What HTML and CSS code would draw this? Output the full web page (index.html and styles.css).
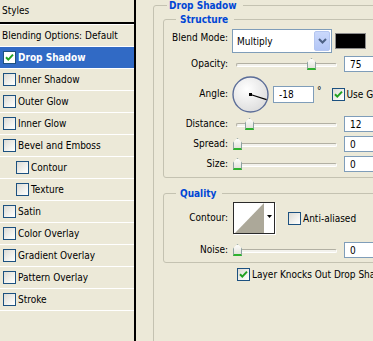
FILE: index.html
```html
<!DOCTYPE html>
<html lang="en">
<head>
  <meta charset="UTF-8" />
  <title>Layer Style</title>
  <link rel="stylesheet" href="styles.css">
</head>
<body>
  <div class="dialog">
    <div class="styles-panel">
      <div class="styles-head">Styles</div>
      <ul class="style-list">
        <li class="style-item blending">Blending Options: Default</li>
        <li class="style-item active">
          <span class="cb on"><svg viewBox="0 0 11 11" width="11" height="11"><path d="M2 5.2l2.3 2.4L9 2.6" /></svg></span>Drop Shadow
        </li>
        <li class="style-item"><span class="cb"></span>Inner Shadow</li>
        <li class="style-item"><span class="cb"></span>Outer Glow</li>
        <li class="style-item"><span class="cb"></span>Inner Glow</li>
        <li class="style-item"><span class="cb"></span>Bevel and Emboss</li>
        <li class="style-item sub"><span class="cb"></span>Contour</li>
        <li class="style-item sub"><span class="cb"></span>Texture</li>
        <li class="style-item"><span class="cb"></span>Satin</li>
        <li class="style-item"><span class="cb"></span>Color Overlay</li>
        <li class="style-item"><span class="cb"></span>Gradient Overlay</li>
        <li class="style-item"><span class="cb"></span>Pattern Overlay</li>
        <li class="style-item"><span class="cb"></span>Stroke</li>
      </ul>
    </div>

    <div class="options">
      <fieldset class="group outer">
        <legend>Drop Shadow</legend>

        <fieldset class="group inner structure">
          <legend>Structure</legend>

          <div class="row blend-row">
            <label class="lbl">Blend Mode:</label>
            <div class="select">
              <span>Multiply</span>
              <span class="select-btn"><svg viewBox="0 0 9 6" width="9" height="6"><path d="M1 1l3.5 3.5L8 1" /></svg></span>
            </div>
            <span class="swatch"></span>
          </div>

          <div class="row">
            <label class="lbl">Opacity:</label>
            <div class="slider"><span class="track"></span><span class="thumb" style="left: 74px"></span></div>
            <input class="num" type="text" value="75">
          </div>

          <div class="row angle-row">
            <label class="lbl">Angle:</label>
            <svg class="dial" viewBox="0 0 37 37" width="37" height="37">
              <defs>
                <radialGradient id="dialFill" cx="40%" cy="35%" r="70%">
                  <stop offset="0" stop-color="#ffffff" />
                  <stop offset="1" stop-color="#dcdcdc" />
                </radialGradient>
              </defs>
              <circle cx="18.5" cy="18.5" r="17.5" fill="url(#dialFill)" stroke="#5b6d98" stroke-width="1.4" />
              <line x1="18.5" y1="18.5" x2="34.5" y2="23.6" stroke="#000" stroke-width="1.2" />
              <rect x="17" y="17" width="3" height="3" fill="#000" />
            </svg>
            <input class="num angle" type="text" value="-18">
            <span class="deg">°</span>
            <span class="cb on"><svg viewBox="0 0 11 11" width="11" height="11"><path d="M2 5.2l2.3 2.4L9 2.6" /></svg></span>
            <span class="cb-text">Use Global Light</span>
          </div>

          <div class="row">
            <label class="lbl">Distance:</label>
            <div class="slider"><span class="track"></span><span class="thumb" style="left: 12px"></span></div>
            <input class="num" type="text" value="12">
          </div>

          <div class="row">
            <label class="lbl">Spread:</label>
            <div class="slider"><span class="track"></span><span class="thumb" style="left: 0px"></span></div>
            <input class="num" type="text" value="0">
          </div>

          <div class="row">
            <label class="lbl">Size:</label>
            <div class="slider"><span class="track"></span><span class="thumb" style="left: 0px"></span></div>
            <input class="num" type="text" value="0">
          </div>
        </fieldset>

        <fieldset class="group inner quality">
          <legend>Quality</legend>

          <div class="row contour-row">
            <label class="lbl">Contour:</label>
            <span class="contour">
              <svg viewBox="0 0 40 30" width="40" height="30">
                <rect width="40" height="30" fill="#fff" />
                <polygon points="1,30 30,0 30,30" fill="#aca899" />
                <polygon points="33,12 38,12 35.5,15" fill="#000" />
              </svg>
            </span>
            <span class="cb aa"></span>
            <span class="cb-text">Anti-aliased</span>
          </div>

          <div class="row noise-row">
            <label class="lbl">Noise:</label>
            <div class="slider"><span class="track"></span><span class="thumb" style="left: 0px"></span></div>
            <input class="num" type="text" value="0">
          </div>
        </fieldset>

        <div class="knockout">
          <span class="cb on"><svg viewBox="0 0 11 11" width="11" height="11"><path d="M2 5.2l2.3 2.4L9 2.6" /></svg></span>
          <span class="cb-text">Layer Knocks Out Drop Shadow</span>
        </div>
      </fieldset>
    </div>
  </div>
</body>
</html>
```

FILE: styles.css
```css
:root {
  --xp-face: #ece9d8;
  --xp-select: #316ac5;
  --xp-field: #7f9db9;
  --xp-check: #1c5180;
  --xp-green: #21a121;
  --group-line: #c4c2b1;
  --legend-blue: #0046d5;
}

body {
  margin: 0;
  width: 373px;
  height: 341px;
  overflow: hidden;
  background: var(--xp-face);
  font-family: "DejaVu Sans Condensed", "Liberation Sans", sans-serif;
  font-size: 10px;
  color: #000;
}

.dialog {
  display: flex;
  height: 341px;
}

/* left column: list of effects */

.styles-panel {
  width: 134px;
  flex: none;
  border-right: 2px solid #000;
}

.styles-head {
  height: 22px;
  line-height: 21px;
  padding-left: 2px;
  border-bottom: 2px solid #000;
}

.style-list {
  list-style: none;
  margin: 0;
  padding: 0;
  border-top: 1px solid #fff;
}

.style-item {
  height: 21px;
  display: flex;
  align-items: center;
  padding-left: 3px;
  border-bottom: 1px solid #fff;
  white-space: nowrap;
}

.style-item.blending {
  padding-left: 2px;
}

.style-item.sub {
  padding-left: 16px;
}

.style-item.active {
  background: var(--xp-select);
  color: #fff;
  font-weight: bold;
}

.style-item .cb {
  margin-right: 2px;
}

/* checkboxes */

.cb {
  width: 13px;
  height: 13px;
  box-sizing: border-box;
  flex: none;
  border: 1px solid var(--xp-check);
  background: linear-gradient(135deg, #dcdbd5, #f6f6f3 70%, #fff);
  display: inline-flex;
}

.cb svg path {
  fill: none;
  stroke: var(--xp-green);
  stroke-width: 2;
}

.active .cb {
  background: #fff;
}

.cb-text {
  margin-left: 2px;
  white-space: nowrap;
}

/* right side: option groups */

.options {
  flex: 1;
  min-width: 0;
  overflow: hidden;
}

.group {
  margin: 0;
  padding: 0;
  min-width: 0;
  border: 1px solid var(--group-line);
  border-radius: 3px;
}

.group > legend {
  line-height: 13px;
  font-weight: bold;
  color: var(--legend-blue);
  white-space: nowrap;
}

.outer {
  margin: -1px 0 0 17px;
  width: 260px;
  height: 400px;
}

.outer > legend {
  margin-left: 13px;
  padding: 0 6px 0 2px;
}

.inner {
  margin-left: 9px;
  width: 240px;
}

.inner > legend {
  margin-left: 12px;
  padding: 0 6px 0 4px;
}

.structure {
  margin-top: 1px;
  padding-bottom: 3px;
}

.quality {
  margin-top: 9px;
  padding-bottom: 2px;
}

.row {
  display: flex;
  align-items: center;
  height: 20px;
  white-space: nowrap;
}

.row > * {
  flex: none;
}

.lbl {
  width: 64px;
  margin-right: 4px;
  margin-bottom: 2px;
  text-align: right;
}

.blend-row {
  height: 24px;
  margin: 3px 0 1px;
}

.blend-row .lbl {
  margin-bottom: 8px;
}

.angle-row {
  height: 40px;
}

.dial {
  margin-left: 0;
}

.contour-row {
  height: 36px;
}

.noise-row {
  margin-top: 4px;
}

/* blend mode dropdown */

.select {
  width: 100px;
  height: 24px;
  box-sizing: border-box;
  border: 1px solid var(--xp-field);
  background: #fff;
  display: flex;
  align-items: center;
  padding-left: 4px;
}

.select-btn {
  margin: 0 1px 0 auto;
  width: 16px;
  height: 20px;
  box-sizing: border-box;
  border: 1px solid #b4c6f0;
  border-radius: 2px;
  background: linear-gradient(#cad8fb, #b3c6f6);
  display: flex;
  align-items: center;
  justify-content: center;
}

.select-btn path {
  fill: none;
  stroke: #4d6185;
  stroke-width: 2;
}

.swatch {
  margin-left: 3px;
  width: 31px;
  height: 16px;
  box-sizing: border-box;
  background: #000;
  border: 1px solid #8c8c8c;
}

/* sliders */

.slider {
  position: relative;
  width: 108px;
  height: 20px;
  margin-left: 1px;
  display: flex;
  align-items: center;
  padding: 0 4px 0 3px;
  box-sizing: border-box;
}

.track {
  flex: 1;
  height: 4px;
  box-sizing: border-box;
  border: 1px solid #b2b0a3;
  border-right-color: #fff;
  border-bottom-color: #fff;
  border-radius: 2px;
  background: #f3f2ec;
  margin-top: 1px;
}

.thumb {
  position: absolute;
  top: 4px;
  width: 9px;
  height: 12px;
  box-sizing: border-box;
  background: linear-gradient(#fdfdfb, #e4e3dc);
  border: 1px solid #8da2a2;
  border-bottom: 2px solid #2fb22f;
  clip-path: polygon(50% 0, 100% 38%, 100% 100%, 0 100%, 0 38%);
}

/* numeric fields */

.num {
  margin: 0 0 0 3px;
  width: 40px;
  height: 16px;
  box-sizing: border-box;
  border: 1px solid var(--xp-field);
  padding: 0 0 0 5px;
  font: inherit;
  color: #000;
  background: #fff;
}

.angle {
  margin-left: 4px;
  width: 41px;
  height: 17px;
}

.deg {
  margin: 0 10px 6px 3px;
  line-height: 1;
}

/* contour preview */

.contour {
  margin-left: 1px;
  width: 42px;
  height: 32px;
  box-sizing: border-box;
  border: 1px solid #2a2a2a;
  box-shadow: 1px 1px 0 #fff;
  display: flex;
}

.cb.aa {
  margin-left: 13px;
}

.knockout {
  display: flex;
  align-items: center;
  margin: 5px 0 0 83px;
  height: 13px;
  white-space: nowrap;
}
```
